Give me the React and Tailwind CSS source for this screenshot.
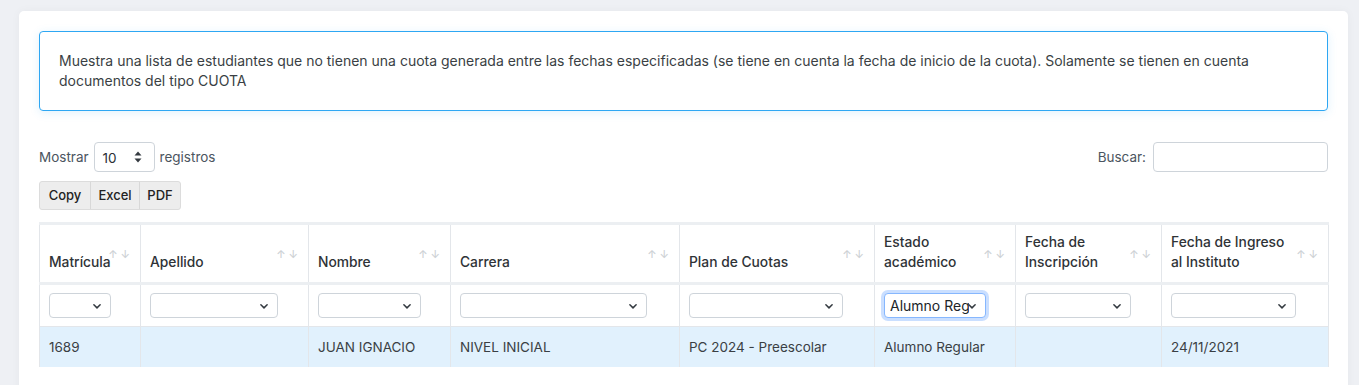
import React from "react";

const Arrows = () => (
  <span className="absolute right-[10px] top-[24px] flex gap-[3px] text-[11px] leading-none text-[#cdd1d5]">
    <span>↑</span>
    <span>↓</span>
  </span>
);

const Chevron = () => (
  <svg width="10" height="10" viewBox="0 0 16 16" className="absolute right-[8px] top-1/2 -translate-y-1/2">
    <path d="M3 6l5 5 5-5" fill="none" stroke="#343a40" strokeWidth="2.4" strokeLinecap="round" strokeLinejoin="round" />
  </svg>
);

const Sel = ({ w, value, focus }) => (
  <div
    className={`relative h-[25px] rounded-[4px] bg-white ${
      focus ? "border border-[#86b7fe] shadow-[0_0_0_3px_rgba(13,110,253,0.22)]" : "border border-[#ced4da]"
    }`}
    style={{ width: w }}
  >
    {value && (
      <span className="absolute left-[5px] top-[1px] w-[79px] overflow-hidden whitespace-nowrap text-[14px] leading-[21px] text-[#212529]">
        {value}
      </span>
    )}
    <Chevron />
  </div>
);

const cols = [
  { label: ["Matrícula"], w: 101, sw: 62 },
  { label: ["Apellido"], w: 168, sw: 128 },
  { label: ["Nombre"], w: 142, sw: 103 },
  { label: ["Carrera"], w: 229, sw: 187 },
  { label: ["Plan de Cuotas"], w: 195, sw: 154 },
  { label: ["Estado", "académico"], w: 141, sw: 102, v: "Alumno Regular", focus: true },
  { label: ["Fecha de", "Inscripción"], w: 146, sw: 106 },
  { label: ["Fecha de Ingreso", "al Instituto"], w: 167, sw: 125 },
];

const row = ["1689", "", "JUAN IGNACIO", "NIVEL INICIAL", "PC 2024 - Preescolar", "Alumno Regular", "", "24/11/2021"];

export default function App() {
  return (
    <div className="h-[385px] w-[1359px] overflow-hidden bg-[#eef0f4] pt-[11px] pl-[19px] font-['Inter',sans-serif] text-[13.5px] text-[#3d4246]">
      <div className="h-[400px] w-[1329px] rounded-[5px] bg-white px-[20px] pt-[20px] shadow-[0_0_10px_rgba(0,0,0,0.04)]">
        <div className="h-[80px] rounded-[4px] border border-[#2ea7f3] px-[19px] pt-[19px] text-[14px] leading-[20px] text-[#3a3f44] shadow-[0_2px_10px_rgba(46,167,243,0.15)]">
          Muestra una lista de estudiantes que no tienen una cuota generada entre las fechas especificadas (se tiene en cuenta la fecha de inicio de la cuota). Solamente se tienen en cuenta documentos del tipo CUOTA
        </div>

        <div className="mt-[31px] flex h-[30px] items-center justify-between">
          <div className="flex items-center gap-[5px] text-[#4b5560]">
            <span>Mostrar</span>
            <div className="relative h-[30px] w-[61px] rounded-[4px] border border-[#ced4da] bg-white">
              <span className="absolute left-[8px] top-[5px] text-[13.5px] text-[#2b3035]">10</span>
              <svg width="8" height="12" viewBox="0 0 8 12" className="absolute right-[12px] top-[8px]">
                <path d="M4 0.5L7.5 4.5H0.5Z" fill="#343a40" />
                <path d="M4 11.5L7.5 7.5H0.5Z" fill="#343a40" />
              </svg>
            </div>
            <span>registros</span>
          </div>
          <div className="flex items-center gap-[7px] text-[#4b5560]">
            <span>Buscar:</span>
            <div className="h-[30px] w-[175px] rounded-[4px] border border-[#ced4da] bg-white" />
          </div>
        </div>

        <div className="mt-[9px] flex h-[29px] w-fit overflow-hidden rounded-[3px] border border-[#dcdcdc] bg-[#ededed] text-[13px] font-medium text-[#222]">
          <div className="flex w-[51px] items-center justify-center border-r border-[#d8d8d8]">Copy</div>
          <div className="flex w-[49px] items-center justify-center border-r border-[#d8d8d8]">Excel</div>
          <div className="flex w-[40px] items-center justify-center">PDF</div>
        </div>

        <table className="mt-[12px] w-[1290px] table-fixed border-collapse border-t-[3px] border-t-[#eceff2]">
          <colgroup>
            {cols.map((c, i) => (
              <col key={i} style={{ width: c.w }} />
            ))}
          </colgroup>
          <thead>
            <tr className="h-[60px] border-b-[3px] border-b-[#eceff2]">
              {cols.map((c, i) => (
                <th
                  key={i}
                  className="relative border-x border-[#e3e6ea] px-[9px] pb-[10px] text-left align-bottom text-[13.8px] font-medium leading-[20px] text-[#2f3337]"
                >
                  {c.label.map((l, j) => (
                    <div key={j}>{l}</div>
                  ))}
                  <Arrows />
                </th>
              ))}
            </tr>
          </thead>
          <tbody>
            <tr className="h-[43px] border-b border-[#e3e6ea]">
              {cols.map((c, i) => (
                <td key={i} className="border-x border-[#e3e6ea] px-[9px] align-middle">
                  <Sel w={c.sw} value={c.v} focus={c.focus} />
                </td>
              ))}
            </tr>
            <tr className="h-[40px] bg-[#e1f1fd]">
              {row.map((t, i) => (
                <td key={i} className="border-x border-[#e3e6ea] px-[9px] text-[13.5px] text-[#3a3f44]">
                  {t}
                </td>
              ))}
            </tr>
          </tbody>
        </table>
      </div>
    </div>
  );
}
